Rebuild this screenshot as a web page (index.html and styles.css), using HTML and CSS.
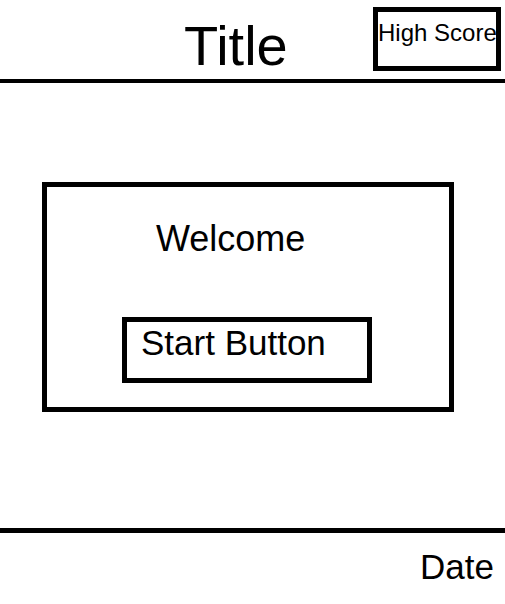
FILE: index.html
```html
<!DOCTYPE html>
<html>
  <head>
    <meta charset="UTF-8">
    <title>Title</title>
    <link rel="stylesheet" href="styles.css">
  </head>
  <body>

    <header class="top-bar">
      <h1 class="top-bar__title">Title</h1>
      <div class="top-bar__score">High Score</div>
    </header>

    <main class="welcome">
      <div class="welcome__box">
        <p class="welcome__text">Welcome</p>
        <button class="welcome__start">Start Button</button>
      </div>
    </main>

    <footer class="bottom-bar">
      <p class="bottom-bar__date">Date</p>
    </footer>

  </body>
</html>
```

FILE: styles.css
```css
* {
  box-sizing: border-box;
}
body {
  margin: 0;
  width: 505px;
  font-family: 'Liberation Sans', Arial, sans-serif;
  color: #000;
  background-color: #fff;
}

/* header */
.top-bar {
  display: flex;
  align-items: flex-start;
  height: 83px;
  border-bottom: solid 4px #000;
}
.top-bar__title {
  margin: 18px 0 0 184px;
  font-size: 56px;
  font-weight: 400;
  line-height: 56px;
}
.top-bar__score {
  margin: 7px 4px 0 auto;
  width: 128px;
  height: 64px;
  border: solid 5px #000;
  padding-top: 9px;
  font-size: 24px;
  line-height: 24px;
  text-align: center;
  white-space: nowrap;
}

/* welcome card */
.welcome {
  padding: 99px 0 0 42px;
}
.welcome__box {
  width: 412px;
  height: 230px;
  border: solid 5px #000;
  padding: 34px 0 0 109px;
}
.welcome__text {
  margin: 0;
  font-size: 36px;
  line-height: 36px;
}
.welcome__start {
  display: block;
  margin: 60px 0 0 -34px;
  width: 250px;
  border: solid 5px #000;
  border-radius: 0;
  background: #fff;
  padding: 3px 0 18px 14px;
  font-family: 'Liberation Sans', Arial, sans-serif;
  font-size: 35px;
  line-height: 35px;
  color: #000;
  text-align: left;
}

/* footer */
.bottom-bar {
  margin-top: 116px;
  border-top: solid 5px #000;
  padding: 17px 11px 0 0;
  text-align: right;
}
.bottom-bar__date {
  margin: 0;
  font-size: 35px;
  line-height: 34px;
}
```
